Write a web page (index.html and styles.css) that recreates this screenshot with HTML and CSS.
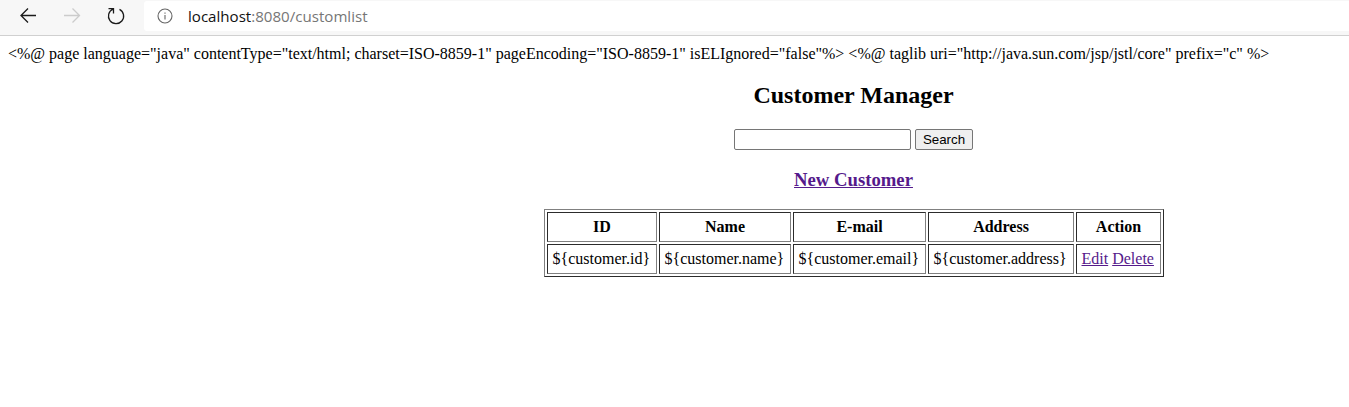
FILE: index.html
```
<!DOCTYPE html>
<html lang="en">
<head>
<meta charset="utf-8">
<title>Customer Manager</title>
<link rel="stylesheet" href="styles.css">
</head>
<body>
<header class="toolbar">
  <svg class="nav" width="144" height="32" viewBox="0 0 144 32" fill="none">
    <path class="ink" d="M36 15.5H21M28 8.5L21 15.5L28 22.5"/>
    <path class="faint" d="M64 15.5H79M72.5 8.5L79.5 15.5L72.5 22.5"/>
    <path class="ink" d="M119.5 9.3A7.6 7.6 0 1 1 113 9.1M108.5 8.7H113.5V13.5"/>
  </svg>
  <div class="address">
    <svg class="info" width="16" height="16" viewBox="0 0 16 16" fill="none">
      <circle cx="8" cy="8" r="7"/><path d="M8 7V11.5M8 4.4V5.8"/>
    </svg>
    <span class="url">localhost<span class="path">:8080/customlist</span></span>
  </div>
</header>
<main class="page">
  <div class="directive">&lt;%@ page language="java" contentType="text/html; charset=ISO-8859-1" pageEncoding="ISO-8859-1" isELIgnored="false"%&gt; &lt;%@ taglib uri="http://java.sun.com/jsp/jstl/core" prefix="c" %&gt;</div>
  <div class="content">
    <h2 class="title">Customer Manager</h2>
    <form class="search"><input class="field" type="text"><button class="button" type="button">Search</button></form>
    <h3 class="new"><a class="visited" href="#">New Customer</a></h3>
    <table class="customers">
      <tr><th class="id">ID</th><th class="name">Name</th><th class="email">E-mail</th><th class="addr">Address</th><th class="action">Action</th></tr>
      <tr><td>${customer.id}</td><td>${customer.name}</td><td>${customer.email}</td><td>${customer.address}</td><td><a class="visited" href="#">Edit</a> <a class="visited" href="#">Delete</a></td></tr>
    </table>
  </div>
</main>
</body>
</html>
```
FILE: styles.css
```
body { margin: 0; background: #fff; color: #000; font: 16px "Liberation Serif", serif; }
.toolbar { display: flex; height: 35px; background: #f7f7f7; border-bottom: 1px solid #d0d0d0; }
.nav { flex: none; stroke-width: 1.3; }
.ink { stroke: #1b1b1b; }
.faint { stroke: #ccc; }
.address { flex: 1; height: 30px; margin-top: 1px; display: flex; align-items: center; background: #fff; padding-left: 13px; box-sizing: border-box; border-radius: 3px 0 0 3px; }
.info { stroke: #666; stroke-width: 1.1; }
.url { margin-left: 15px; font: 15.1px "Open Sans", sans-serif; color: #111; white-space: nowrap; }
.path { color: #767676; }
.page { padding: 8px 0 0 8px; }
.directive { height: 18px; line-height: 19px; white-space: nowrap; }
.content { padding-left: 350px; display: flex; flex-direction: column; align-items: center; }
.title { margin: 20px 0; font-size: 24px; line-height: 27px; }
.search { display: flex; gap: 4px; margin: 0; }
.field { width: 177px; height: 21px; box-sizing: border-box; border: 1px solid #767676; padding: 1px 2px; border-radius: 2px; }
.button { width: 58px; height: 21px; box-sizing: border-box; border: 1px solid #767676; padding: 0; border-radius: 2px; background: #efefef; font: 13.333px "Liberation Sans", sans-serif; }
.new { margin: 19px 0; font-size: 18.72px; line-height: 21px; }
.visited { color: #551a8b; }
.customers { width: 620px; margin-left: 1px; table-layout: fixed; box-sizing: border-box; border: 1px solid; border-color: #808080 #2c2c2c #2c2c2c #808080; border-spacing: 2px; }
.customers th, .customers td { box-sizing: border-box; border: 1px solid; border-color: #2c2c2c #808080 #808080 #2c2c2c; padding: 5px 0 5px 4.5px; line-height: 18px; white-space: nowrap; }
.customers th { padding: 5px; }
.id { width: 110px; }
.name { width: 132px; }
.email { width: 133px; }
.addr { width: 146px; }
.action { width: 85px; }
```
